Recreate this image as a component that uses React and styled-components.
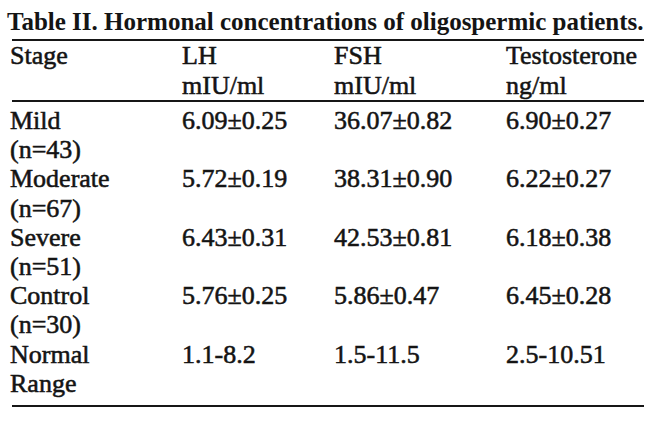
import React from "react";
import styled, { createGlobalStyle } from "styled-components";

const Global = createGlobalStyle`
  html, body { margin: 0; padding: 0; background: #ffffff; }
  body { font-family: "Liberation Serif", "Times New Roman", serif; color: #111111; }
`;

const Page = styled.div`
  width: 650px;
  height: 428px;
  box-sizing: border-box;
  padding: 6px 4px 0 7px;
  overflow: hidden;
  font-family: "Liberation Serif", "Times New Roman", serif;
`;

const Title = styled.h1`
  margin: 0;
  font-family: "Liberation Serif", "Times New Roman", serif;
  font-size: 25px;
  line-height: 32px;
  font-weight: 700;
  white-space: nowrap;
  color: #141414;
`;

const Table = styled.div`
  margin: 1px 0 0 5px;
  width: 632px;
`;

const Rule = styled.div`
  height: 2px;
  background: #161616;
`;

const Row = styled.div`
  display: grid;
  grid-template-columns: 172px 152px 172px 1fr;
  font-family: "Liberation Serif", "Times New Roman", serif;
  font-size: 26px;
  font-weight: 400;
  color: #141414;
  -webkit-text-stroke: 0.55px #141414;
  line-height: ${(p) => p.$lh}px;
  padding-top: ${(p) => p.$pt || 0}px;
  padding-bottom: ${(p) => p.$pb || 0}px;
`;

const Cell = styled.div`
  white-space: nowrap;
  margin-left: -2px;
`;

const Line = styled.div``;

const header = [
  ["Stage", ""],
  ["LH", "mIU/ml"],
  ["FSH", "mIU/ml"],
  ["Testosterone", "ng/ml"],
];

const rows = [
  ["Mild", "(n=43)", "6.09±0.25", "36.07±0.82", "6.90±0.27"],
  ["Moderate", "(n=67)", "5.72±0.19", "38.31±0.90", "6.22±0.27"],
  ["Severe", "(n=51)", "6.43±0.31", "42.53±0.81", "6.18±0.38"],
  ["Control", "(n=30)", "5.76±0.25", "5.86±0.47", "6.45±0.28"],
  ["Normal", "Range", "1.1-8.2", "1.5-11.5", "2.5-10.51"],
];

export default function App() {
  return (
    <Page>
      <Global />
      <Title>Table II. Hormonal concentrations of oligospermic patients.</Title>
      <Table>
        <Rule />
        <Row $lh={29.5}>
          {header.map(([a, b]) => (
            <Cell key={a}>
              <Line>{a}</Line>
              <Line>{b || "\u00a0"}</Line>
            </Cell>
          ))}
        </Row>
        <Rule />
        <Row $lh={29.2} $pt={4} $pb={7}>
          {[0, 1, 2, 3].map((col) => (
            <Cell key={col}>
              {rows.map((r) =>
                col === 0 ? (
                  <React.Fragment key={r[0]}>
                    <Line>{r[0]}</Line>
                    <Line>{r[1]}</Line>
                  </React.Fragment>
                ) : (
                  <React.Fragment key={r[0]}>
                    <Line>{r[col + 1]}</Line>
                    <Line>{"\u00a0"}</Line>
                  </React.Fragment>
                )
              )}
            </Cell>
          ))}
        </Row>
        <Rule />
      </Table>
    </Page>
  );
}
